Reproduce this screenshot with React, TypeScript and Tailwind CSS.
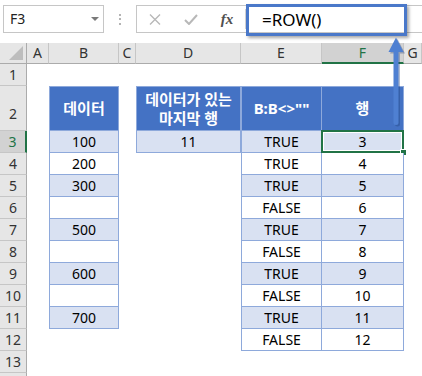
import React from "react";

const letters = ["", "A", "B", "C", "D", "E", "F", "G"];
const rows = [1, 2, 3, 4, 5, 6, 7, 8, 9, 10, 11, 12, 13, 14];

const colB: Record<number, string> = { 2: "데이터", 3: "100", 4: "200", 5: "300", 6: "", 7: "500", 8: "", 9: "600", 10: "", 11: "700" };
const colD: Record<number, string> = { 2: "데이터가 있는\n마지막 행", 3: "11" };
const colE: Record<number, string> = { 2: 'B:B<>""', 3: "TRUE", 4: "TRUE", 5: "TRUE", 6: "FALSE", 7: "TRUE", 8: "FALSE", 9: "TRUE", 10: "FALSE", 11: "TRUE", 12: "FALSE" };
const colF: Record<number, string> = { 2: "행", 3: "3", 4: "4", 5: "5", 6: "6", 7: "7", 8: "8", 9: "9", 10: "10", 11: "11", 12: "12" };

function inTable(c: number, r: number) {
  return (c === 2 && r >= 2 && r <= 11) || (c === 4 && r >= 2 && r <= 3) || ((c === 5 || c === 6) && r >= 2 && r <= 12);
}

function cellText(c: number, r: number) {
  if (c === 2) return colB[r] ?? "";
  if (c === 4) return colD[r] ?? "";
  if (c === 5) return colE[r] ?? "";
  if (c === 6) return colF[r] ?? "";
  return "";
}

function Cell({ c, r }: { c: number; r: number }) {
  if (c === 0) {
    const sel = r === 3;
    return (
      <div
        className={
          sel
            ? "flex justify-center items-center bg-[#d2d2d2] text-[#217346] border-r-2 border-b border-r-[#217346] border-b-[#c6c6c6] text-[14px] leading-none"
            : r === 2
            ? "flex justify-center items-end pb-[9px] bg-[#e6e6e6] text-[#333] border-r border-b border-r-[#ababab] border-b-[#c6c6c6] text-[14px] leading-none"
            : "flex justify-center items-center bg-[#e6e6e6] text-[#333] border-r border-b border-r-[#ababab] border-b-[#c6c6c6] text-[14px] leading-none"
        }
      >
        {r < 14 ? r : ""}
      </div>
    );
  }
  if (!inTable(c, r)) return <div />;
  const header = r === 2;
  const left = c === 2 || c === 4 || c === 5;
  const text = cellText(c, r);
  let cls = "relative flex items-center justify-center text-center border-r border-b border-[#8ea9db] ";
  cls += header
    ? "bg-[#4472c4] text-white font-bold text-[15px] leading-[19px] whitespace-pre-line"
    : r % 2 === 1
    ? "bg-[#d9e1f2] text-black text-[14px] leading-none"
    : "bg-white text-black text-[14px] leading-none";
  if (left) cls += " border-l";
  if (header) cls += " border-t";
  return (
    <div className={cls}>
      <span>{text}</span>
      {c === 6 && r === 3 && (
        <>
          <div className="absolute left-[-1px] top-[-1px] right-[-1px] bottom-[-1px] border-2 border-[#217346] shadow-[inset_0_0_0_1px_white]" />
          <div className="absolute right-[-4px] bottom-[-4px] w-[7px] h-[7px] bg-[#217346] border border-white" />
        </>
      )}
    </div>
  );
}

export default function App() {
  return (
    <div className="relative w-[422px] h-[376px] overflow-hidden bg-white font-['Noto_Sans','Noto_Sans_CJK_KR',sans-serif] text-black">
      {/* Toolbar */}
      <div className="h-[43px] flex items-start pt-[5px] pl-[3px]">
        <div className="w-[101px] h-[28px] border border-[#c6c6c6] bg-white flex items-center justify-between pl-[6px] pr-[4px]">
          <span className="text-[14px] leading-none text-[#222]">F3</span>
          <svg width="8" height="5" viewBox="0 0 8 5">
            <polygon points="0,0 8,0 4,4" fill="#7a7a7a" />
          </svg>
        </div>
        <div className="w-[32px] h-[28px] flex flex-col items-center justify-center gap-[2.5px]">
          <div className="w-[2px] h-[2px] bg-[#b4b4b4]" />
          <div className="w-[2px] h-[2px] bg-[#b4b4b4]" />
          <div className="w-[2px] h-[2px] bg-[#b4b4b4]" />
        </div>
        <div className="flex-1 h-[28px] border border-r-0 border-[#c6c6c6] bg-white flex items-center">
          <div className="w-[36px] flex justify-center">
            <svg width="12" height="11" viewBox="0 0 12 11">
              <path d="M1 0.5 L11 10.5 M11 0.5 L1 10.5" stroke="#b8b8b8" strokeWidth="1.4" fill="none" />
            </svg>
          </div>
          <div className="w-[36px] flex justify-center">
            <svg width="14" height="11" viewBox="0 0 14 11">
              <path d="M1 6 L5 10 L13 1" stroke="#b8b8b8" strokeWidth="2" fill="none" />
            </svg>
          </div>
          <div className="w-[36px] flex justify-center">
            <span className="font-['Liberation_Serif',serif] italic font-bold text-[15px] leading-none text-[#505050]">fx</span>
          </div>
          <div className="w-px h-[20px] bg-[#d4d4d4]" />
          <span className="pl-[16px] text-[17px] leading-none text-black">=ROW()</span>
        </div>
      </div>

      {/* Grid */}
      <div className="grid grid-cols-[27px_22px_70px_17px_105px_81px_82px_18px] grid-rows-[21px_22px_45px_repeat(12,22px)]">
        {letters.map((l, c) =>
          c === 0 ? (
            <div key="corner" className="bg-[#e6e6e6] border-r border-b border-[#ababab] flex items-end justify-end pr-[3px] pb-[3px]">
              <svg width="14" height="14" viewBox="0 0 14 14">
                <polygon points="14,0 14,14 0,14" fill="#bdbdbd" />
              </svg>
            </div>
          ) : c === 6 ? (
            <div key={l} className="bg-[#d2d2d2] text-[#217346] border-r border-r-[#c6c6c6] border-b-2 border-b-[#217346] flex items-center justify-center text-[14px] leading-none">
              {l}
            </div>
          ) : (
            <div key={l} className="bg-[#e6e6e6] text-[#333] border-r border-b border-r-[#c6c6c6] border-b-[#ababab] flex items-center justify-center text-[14px] leading-none">
              {l}
            </div>
          )
        )}
        {rows.map((r) => letters.map((_, c) => <Cell key={`${r}-${c}`} c={c} r={r} />))}
      </div>

      {/* Highlight box over formula */}
      <div className="absolute left-[246px] top-[4px] w-[161px] h-[32px] border-[3px] border-[#4a78c9] shadow-[2px_2px_3px_rgba(0,0,0,0.35)]" />

      {/* Arrow */}
      <svg className="absolute left-0 top-0 pointer-events-none" width="422" height="376" viewBox="0 0 422 376">
        <g fill="#1f3f7a" opacity="0.35" transform="translate(1.5,1.5)">
          <polygon points="388.5,52 396,37.5 403.5,52" />
          <rect x="393.5" y="50" width="5" height="75" rx="2.5" />
        </g>
        <g fill="#4f80d2">
          <polygon points="388.5,52 396,37.5 403.5,52" />
          <rect x="393.5" y="50" width="5" height="75" rx="2.5" />
        </g>
      </svg>
    </div>
  );
}
